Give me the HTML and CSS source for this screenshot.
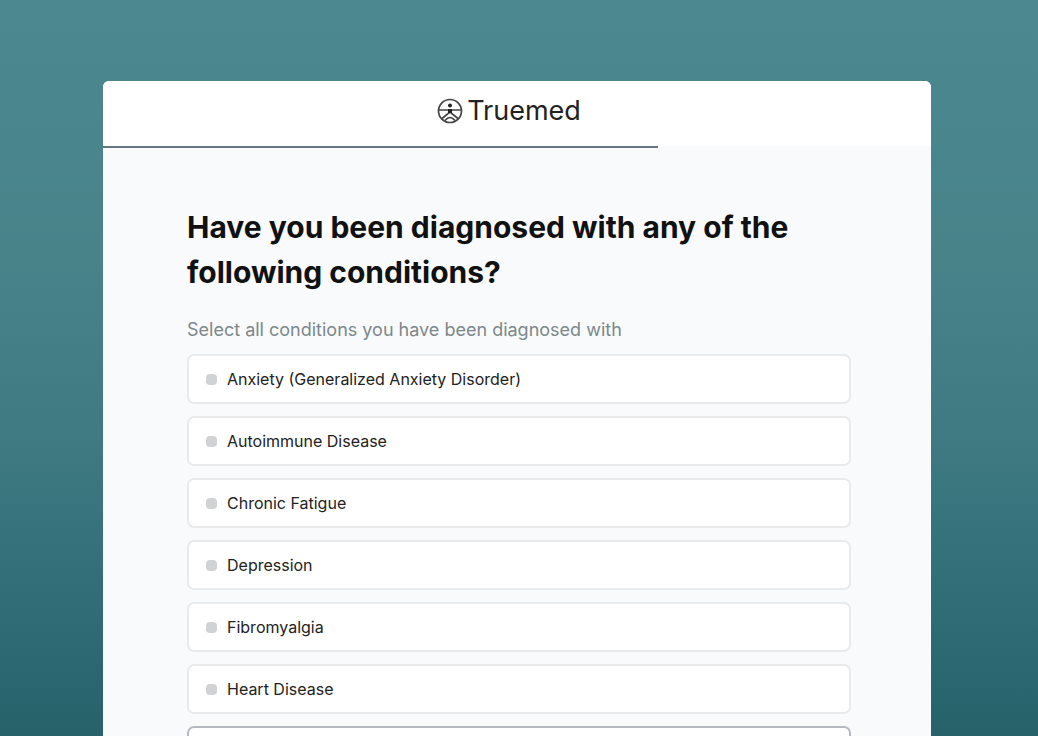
FILE: index.html
```html
<!DOCTYPE html>
<html lang="en">
<head>
  <meta charset="UTF-8">
  <meta name="viewport" content="width=device-width, initial-scale=1">
  <title>Truemed</title>
  <link rel="stylesheet" href="styles.css">
</head>
<body>
  <div class="card">
    <header class="header">
      <svg class="logo-icon" viewBox="0 0 26 26" fill="none" stroke="#444" stroke-width="1.7" aria-hidden="true">
        <circle cx="13" cy="13" r="11.5"/>
        <circle cx="13" cy="7.500" r="2" fill="#222" stroke="none"/>
        <path d="M2 12h22M5 20.500l8-6.500 8 6.500M8 22.500q5-6 10 0"/>
        <path d="M11 11h4v4h-4z" fill="#222" stroke="none"/>
      </svg>
      <span class="logo-text">Truemed</span>
    </header>
    <div class="progress"><div class="progress-bar"></div></div>
    <form class="survey">
      <h1 class="title">Have you been diagnosed with any of the following conditions?</h1>
      <p class="subtitle">Select all conditions you have been diagnosed with</p>
      <div class="options">
        <label class="option"><input type="checkbox" name="condition" value="anxiety">Anxiety (Generalized Anxiety Disorder)</label>
        <label class="option"><input type="checkbox" name="condition" value="autoimmune">Autoimmune Disease</label>
        <label class="option"><input type="checkbox" name="condition" value="fatigue">Chronic Fatigue</label>
        <label class="option"><input type="checkbox" name="condition" value="depression">Depression</label>
        <label class="option"><input type="checkbox" name="condition" value="fibromyalgia">Fibromyalgia</label>
        <label class="option"><input type="checkbox" name="condition" value="heart">Heart Disease</label>
        <label class="option active"><input type="checkbox" name="condition" value="other" aria-label="Other condition"></label>
      </div>
    </form>
  </div>
</body>
</html>
```
FILE: styles.css
```css
* {
  box-sizing: border-box;
}
body {
  margin: 0;
  height: 100vh;
  overflow: hidden;
  padding: 81px 107px 0 103px;
  background: linear-gradient(#4c888f 0%, #48838a 35%, #3f7a83 60%, #2e6b74 85%, #27626b 100%);
  font-family: Inter, "Liberation Sans", sans-serif;
  color: #111;
}
.card {
  background: #f9fafb;
  border-radius: 6px 6px 0 0;
  overflow: hidden;
}
.header {
  display: flex;
  align-items: center;
  justify-content: center;
  gap: 4px;
  height: 65px;
  padding: 0 16px 6px 0;
  background: #fff;
}
.logo-icon {
  width: 26px;
  height: 26px;
}
.logo-text {
  font-size: 27px;
  color: #222;
}
.progress {
  height: 2px;
}
.progress-bar {
  width: 67%;
  height: 100%;
  background: #66777f;
}
.survey {
  padding: 57px 80px 40px 84px;
}
.title {
  margin: 0;
  font-size: 30px;
  line-height: 45px;
  font-weight: 700;
}
.subtitle {
  margin: 23px 0 12px;
  font-size: 18px;
  line-height: 24px;
  color: #7c888b;
}
.options {
  display: flex;
  flex-direction: column;
  gap: 12px;
}
.option {
  display: flex;
  align-items: center;
  gap: 10px;
  height: 50px;
  padding: 0 17px;
  background: #fff;
  border: 2px solid #e8eaeb;
  border-radius: 7px;
  font-size: 16px;
  color: #222;
}
.option.active {
  border-color: #b4babf;
}
.option input {
  appearance: none;
  width: 11px;
  height: 11px;
  margin: 0;
  border-radius: 4px;
  background: #d0d2d3;
}
.option input:checked {
  background: #3f7a83;
}
```
